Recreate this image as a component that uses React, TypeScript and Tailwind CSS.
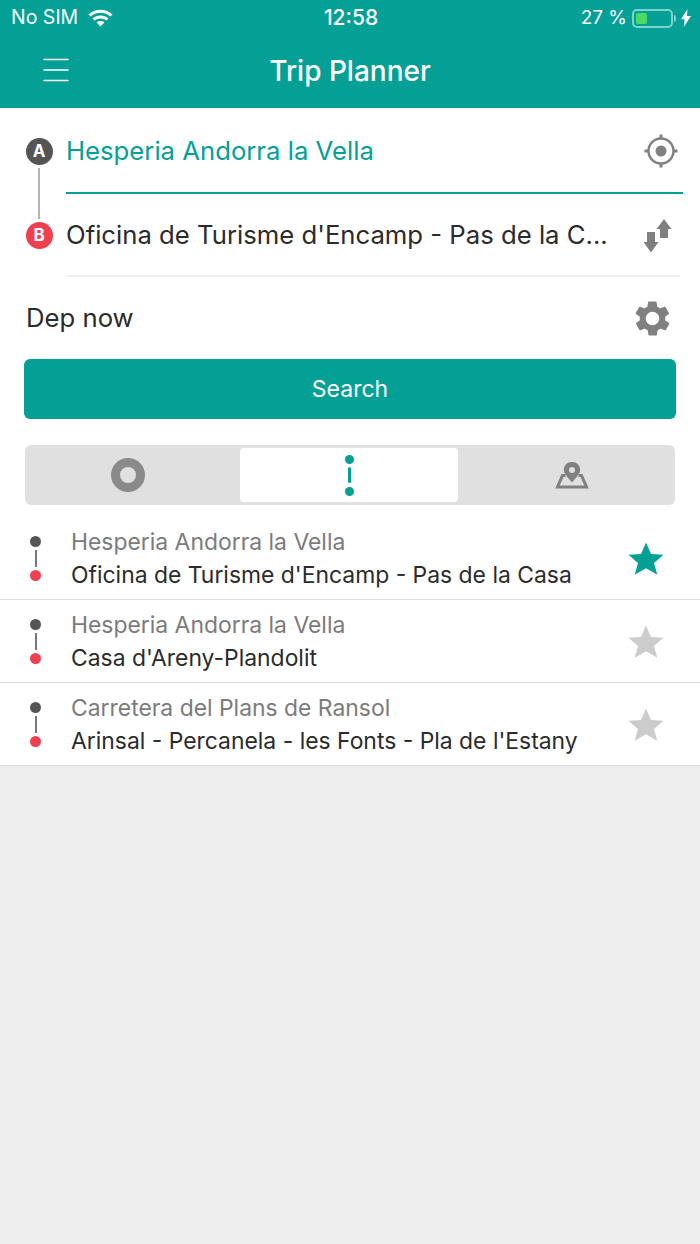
import { Menu } from 'lucide-react'

const teal = '#04a096'

const routes = [
  { from: 'Hesperia Andorra la Vella', to: "Oficina de Turisme d'Encamp - Pas de la Casa", fav: true },
  { from: 'Hesperia Andorra la Vella', to: "Casa d'Areny-Plandolit", fav: false },
  { from: 'Carretera del Plans de Ransol', to: "Arinsal - Percanela - les Fonts - Pla de l'Estany", fav: false },
]

function Wifi() {
  return (
    <svg width="25" height="18" viewBox="0 0 25 18" fill="none" stroke="#fff" strokeWidth="3">
      <path d="M1.5 6.5C7.5 .8 17.5 .8 23.5 6.5" />
      <path d="M5.5 10.5C9.3 7 15.7 7 19.5 10.5" />
      <path d="M12.5 17.5 8.6 13.5C10.7 11.6 14.3 11.6 16.4 13.5Z" fill="#fff" stroke="none" />
    </svg>
  )
}

function Battery() {
  return (
    <div className="flex items-center">
      <div className="w-[41px] h-[19px] rounded-[5px] border-2 border-white/50 p-[2px]">
        <div className="w-[11px] h-full rounded-[2px] bg-[#4cd964]" />
      </div>
      <div className="w-[2px] h-[7px] ml-[1px] rounded-r bg-white/50" />
    </div>
  )
}

function Bolt() {
  return (
    <svg width="10" height="18" viewBox="0 0 10 18" fill="#fff">
      <path d="M6.5 0 0 10.2h3.6L2.8 18 10 7H6z" />
    </svg>
  )
}

function Target() {
  return (
    <svg width="34" height="34" viewBox="0 0 34 34" fill="none" stroke="#808080">
      <circle cx="17" cy="17" r="12.5" strokeWidth="2.4" />
      <circle cx="17" cy="17" r="5.5" fill="#808080" stroke="none" />
      <path d="M17 0.5v4.5M17 29v4.5M0.5 17H5M29 17h4.5" strokeWidth="3" />
    </svg>
  )
}

function Swap() {
  return (
    <svg width="28" height="34" viewBox="0 0 28 34" fill="#808080">
      <path d="M20 0 27.500 10H24V19H16V10H12.500Z" />
      <path d="M3 13H11V23H14.500L7 33.500 -.5 23H3Z" />
    </svg>
  )
}

function Gear() {
  return (
    <svg width="41" height="41" viewBox="0 0 24 24" fill="#808080">
      <path fillRule="evenodd" d="M19.4 13a7.6 7.6 0 0 0 0-2l2.1-1.6a.5.5 0 0 0 .1-.6l-2-3.500a.5.5 0 0 0-.6-.2l-2.500 1a7.300 7.300 0 0 0-1.700-1l-.4-2.600a.5.5 0 0 0-.5-.4h-4a.5.5 0 0 0-.5.4l-.4 2.600a7.300 7.300 0 0 0-1.700 1l-2.500-1a.5.5 0 0 0-.6.2l-2 3.500a.5.5 0 0 0 .1.6L4.600 11a7.600 7.600 0 0 0 0 2l-2.100 1.600a.5.5 0 0 0-.1.6l2 3.500c.1.2.4.3.6.2l2.500-1c.5.4 1.100.8 1.700 1l.4 2.600c0 .2.2.4.5.4h4c.3 0 .5-.2.5-.4l.4-2.600c.6-.2 1.200-.6 1.700-1l2.500 1c.2.1.5 0 .6-.2l2-3.500a.5.5 0 0 0-.1-.6zM12 16a4 4 0 1 1 0-8 4 4 0 0 1 0 8z" />
    </svg>
  )
}

function MapPin() {
  return (
    <svg width="34" height="27" viewBox="0 0 34 27" fill="none">
      <path d="M10.500 13.500H7.500L2.500 25H31.500L26.500 13.500H23.500" stroke="#808080" strokeWidth="3" />
      <path fillRule="evenodd" fill="#808080" d="M17 0C12.300 0 8.800 3.400 8.800 7.800 8.800 11.500 13 16 17 20.500 21 16 25.200 11.500 25.200 7.800 25.200 3.400 21.700 0 17 0zm0 5a3 3 0 1 1 0 6 3 3 0 0 1 0-6z" />
    </svg>
  )
}

function Star({ color }: { color: string }) {
  return (
    <svg width="36" height="33" viewBox="0 0 36 33" fill={color}>
      <path d="M18 0.500 23 12 35.500 12.800 26 21 29.300 32.800 18 26.300 6.700 32.800 10 21 .5 12.800 13 12z" />
    </svg>
  )
}

export default function App() {
  return (
    <div className="min-h-[1244px] bg-[#eeeeee] font-['Inter',sans-serif] text-[#2b2b2b]">
      <header className="h-[108px] bg-[#04a096] text-white">
        <div className="h-[36px] grid grid-cols-3 items-center pl-[11px] pr-[9px] text-[19px]">
          <div className="flex items-center gap-[10px]">
            <span className="text-[19.5px]">No SIM</span>
            <Wifi />
          </div>
          <div className="text-center text-[21px] font-medium">12:58</div>
          <div className="flex items-center justify-end gap-[5px]">
            <span>27 %</span>
            <Battery />
            <Bolt />
          </div>
        </div>
        <div className="relative h-[72px] flex items-center justify-center">
          <Menu className="absolute left-[38px] top-[16px]" size={36} strokeWidth={1.5} absoluteStrokeWidth />
          <h1 className="text-[28px] font-medium pb-[2px]">Trip Planner</h1>
        </div>
      </header>

      <section className="bg-white">
        <div className="flex">
          <div className="w-[66px] shrink-0 flex flex-col items-center pt-[30px] pl-[12px]">
            <div className="w-[27px] h-[27px] rounded-full bg-[#555555] text-white text-[17px] font-bold flex items-center justify-center">A</div>
            <div className="w-[2px] h-[51px] my-[3px] bg-[#b4b4b4]" />
            <div className="w-[27px] h-[27px] rounded-full bg-[#f0404f] text-white text-[17px] font-bold flex items-center justify-center">B</div>
          </div>
          <div className="flex-1 pr-[17px]">
            <div className="h-[86px] pt-[2px] flex items-center justify-between border-b-2 border-[#04a096] pr-[5px]">
              <span className="text-[25.7px] text-[#04a096]">Hesperia Andorra la Vella</span>
              <Target />
            </div>
            <div className="h-[83px] pt-[2px] mr-[3px] flex items-center justify-between border-b-2 border-[#eeeeee] pr-[8px]">
              <span className="text-[25.7px] whitespace-nowrap">Oficina de Turisme d'Encamp - Pas de la C...</span>
              <Swap />
            </div>
          </div>
        </div>

        <div className="h-[82px] flex items-center justify-between pl-[26px] pr-[27px]">
          <span className="text-[25.7px]">Dep now</span>
          <Gear />
        </div>

        <div className="px-[24px]">
          <button className="w-full h-[60px] rounded-[6px] bg-[#04a096] text-white text-[23px]">Search</button>
        </div>

        <div className="mx-[25px] mt-[26px] h-[60px] rounded-[6px] bg-[#e0e0e0] flex items-center">
          <div className="w-[215px] flex justify-center pr-[9px]">
            <div className="w-[34px] h-[34px] rounded-full border-[9px] border-[#8a8a8a]" />
          </div>
          <div className="w-[218px] h-[54px] rounded-[4px] bg-white flex flex-col items-center justify-center">
            <div className="w-[9px] h-[9px] rounded-full bg-[#04a096]" />
            <div className="w-[3px] h-[16px] my-[3.5px] rounded-full bg-[#04a096]" />
            <div className="w-[9px] h-[9px] rounded-full bg-[#04a096]" />
          </div>
          <div className="flex-1 flex justify-center pl-[10px]">
            <MapPin />
          </div>
        </div>

        <ul className="mt-[12px]">
          {routes.map((r) => (
            <li key={r.to} className="h-[83px] flex items-center border-b border-[#dedede]">
              <div className="w-[71px] shrink-0 flex flex-col items-center">
                <div className="w-[11px] h-[11px] rounded-full bg-[#555555]" />
                <div className="w-[2px] h-[17px] my-[3px] bg-[#777777]" />
                <div className="w-[11px] h-[11px] rounded-full bg-[#f0404f]" />
              </div>
              <div className="flex-1 pt-[2px] leading-[33px]">
                <div className="text-[22.9px] text-[#7b7b7b]">{r.from}</div>
                <div className="text-[22.9px]">{r.to}</div>
              </div>
              <div className="pr-[36px]">
                <Star color={r.fav ? teal : '#cccccc'} />
              </div>
            </li>
          ))}
        </ul>
      </section>
    </div>
  )
}
